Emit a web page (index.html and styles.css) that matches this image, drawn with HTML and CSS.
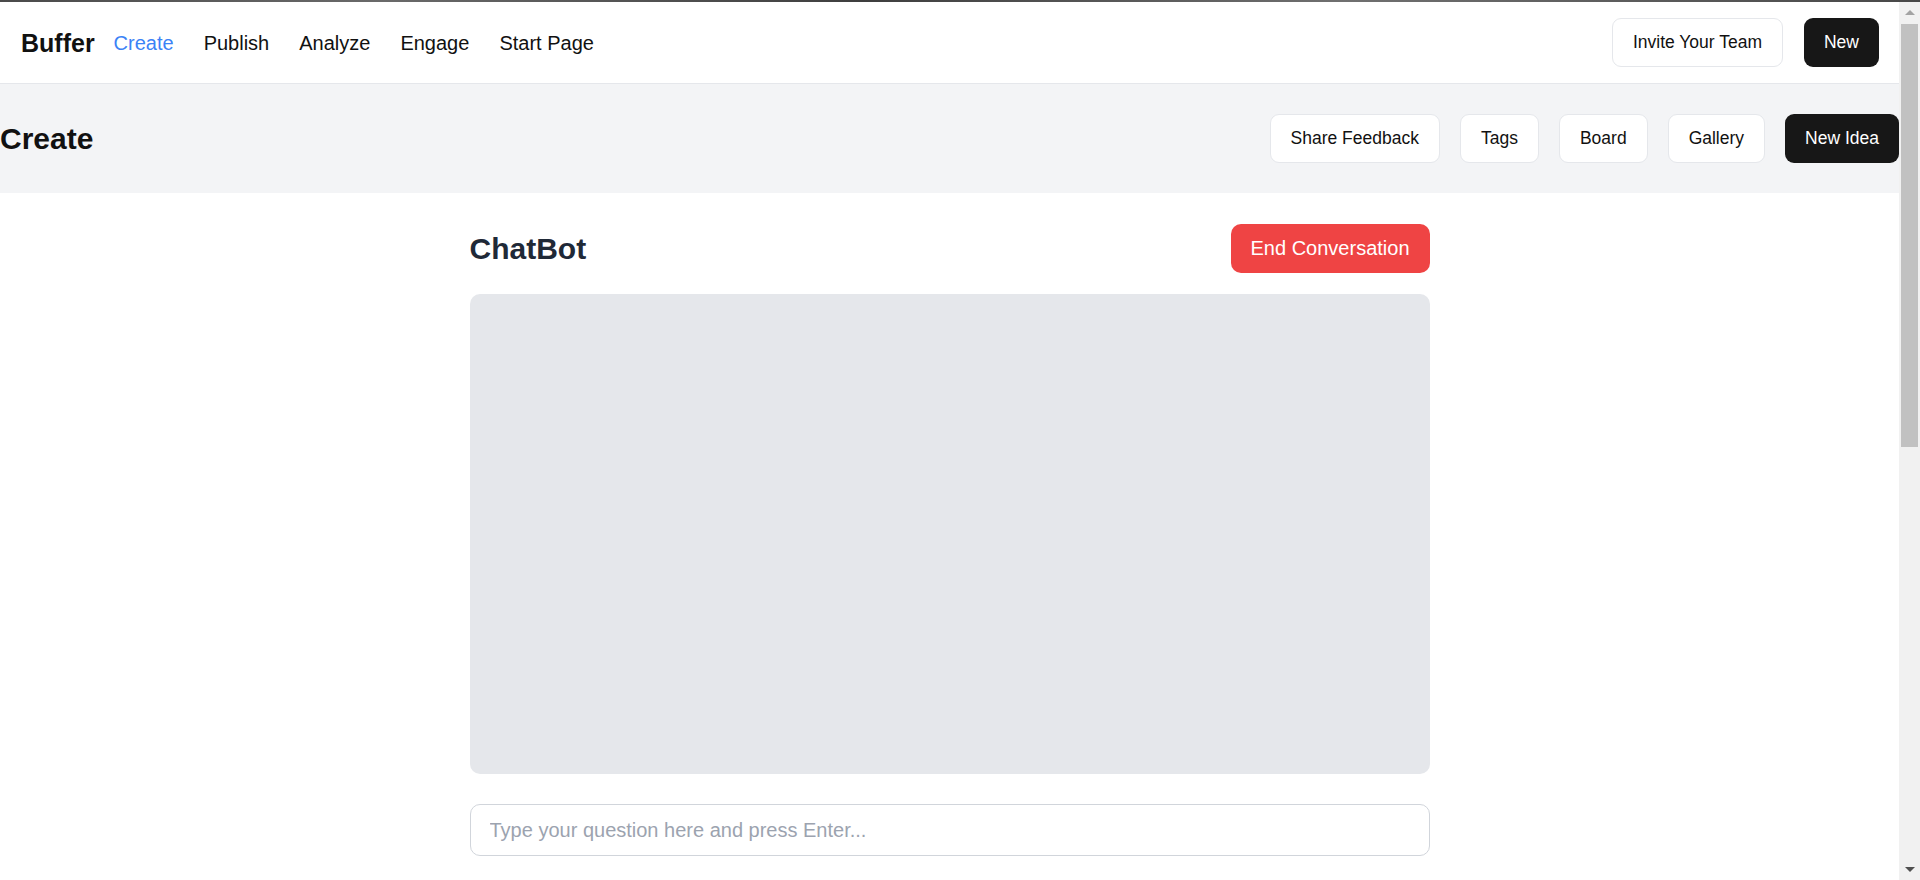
FILE: index.html
```html
<!DOCTYPE html>
<html lang="en">
<head>
<meta charset="utf-8">
<title>Buffer - Create</title>
<link rel="stylesheet" href="styles.css">
</head>
<body>
<div class="topstrip"></div>
<div class="frame">
  <div class="app">
    <header class="nav">
      <div class="nav-left">
        <span class="brand">Buffer</span>
        <nav class="links">
          <a class="link active">Create</a>
          <a class="link">Publish</a>
          <a class="link">Analyze</a>
          <a class="link">Engage</a>
          <a class="link">Start Page</a>
        </nav>
      </div>
      <div class="nav-right">
        <button class="btn btn-light">Invite Your Team</button>
        <button class="btn btn-dark">New</button>
      </div>
    </header>
    <section class="band">
      <h1 class="band-title">Create</h1>
      <div class="band-actions">
        <button class="btn btn-light">Share Feedback</button>
        <button class="btn btn-light">Tags</button>
        <button class="btn btn-light">Board</button>
        <button class="btn btn-light">Gallery</button>
        <button class="btn btn-dark">New Idea</button>
      </div>
    </section>
    <main class="main">
      <div class="chat">
        <div class="chat-head">
          <h2 class="chat-title">ChatBot</h2>
          <button class="btn-end">End Conversation</button>
        </div>
        <div class="chat-box"></div>
        <input class="chat-input" type="text" placeholder="Type your question here and press Enter...">
      </div>
    </main>
  </div>
  <div class="scrollbar">
    <div class="sb-btn"><span class="arrow-up"></span></div>
    <div class="sb-track"><div class="sb-thumb"></div></div>
    <div class="sb-btn sb-btn-down"><span class="arrow-down"></span></div>
  </div>
</div>
</body>
</html>
```
FILE: styles.css
```css
* { box-sizing: border-box; }
html, body { margin: 0; padding: 0; height: 880px; overflow: hidden; }
body {
  font-family: "Liberation Sans", Arial, sans-serif;
  color: #111;
  background: #fff;
}
.topstrip {
  height: 2px;
  background: linear-gradient(90deg, #4a4a4a, #6a6a6a 20%, #3e3e3e 45%, #707070 70%, #484848);
}
.frame {
  display: grid;
  grid-template-columns: 1fr 21px;
  height: 878px;
}
.app { overflow: hidden; min-width: 0; }

.nav {
  height: 82px;
  border-bottom: 1px solid #e5e7eb;
  display: flex;
  align-items: center;
  justify-content: space-between;
  padding: 0 20px 0 21px;
}
.nav-left { display: flex; align-items: center; padding-top: 2px; }
.brand { font-size: 25px; font-weight: bold; color: #111; }
.links { display: flex; gap: 30px; margin-left: 19px; }
.link { font-size: 20px; color: #111; text-decoration: none; }
.link.active { color: #3b82f6; }
.nav-right { display: flex; gap: 21px; align-items: center; }

.btn {
  height: 49px;
  padding: 0 20px;
  font-family: "Liberation Sans", Arial, sans-serif;
  font-size: 17.5px;
  border-radius: 9px;
  cursor: pointer;
}
.btn-light { background: #fff; color: #111; border: 1px solid #e5e7eb; }
.btn-dark { background: #171717; color: #fff; border: none; }

.band {
  height: 109px;
  background: #f3f4f6;
  display: flex;
  align-items: center;
  justify-content: space-between;
}
.band-title { margin: 0; font-size: 30px; font-weight: bold; color: #111; }
.band-actions { display: flex; gap: 20px; }

.main { padding-top: 31px; }
.chat { width: 960px; margin: 0 auto; }
.chat-head {
  display: flex;
  align-items: center;
  justify-content: space-between;
  height: 49px;
}
.chat-title { margin: 0; font-size: 30px; font-weight: bold; color: #1f2937; }
.btn-end {
  height: 49px;
  padding: 0 20px;
  background: #ef4444;
  color: #fff;
  border: none;
  border-radius: 10px;
  font-family: "Liberation Sans", Arial, sans-serif;
  font-size: 20px;
}
.chat-box {
  margin-top: 21px;
  height: 480px;
  background: #e5e7eb;
  border-radius: 10px;
}
.chat-input {
  display: block;
  width: 100%;
  margin-top: 30px;
  height: 52px;
  padding: 0 19px;
  border: 1px solid #d1d5db;
  border-radius: 10px;
  font-family: "Liberation Sans", Arial, sans-serif;
  font-size: 20px;
  color: #111;
  outline: none;
}
.chat-input::placeholder { color: #9ca3af; }

.scrollbar {
  background: #f1f1f1;
  display: flex;
  flex-direction: column;
}
.sb-btn {
  height: 21px;
  display: flex;
  align-items: center;
  justify-content: center;
}
.arrow-up {
  width: 0; height: 0;
  border-left: 5px solid transparent;
  border-right: 5px solid transparent;
  border-bottom: 5px solid #a3a3a3;
}
.arrow-down {
  width: 0; height: 0;
  border-left: 5px solid transparent;
  border-right: 5px solid transparent;
  border-top: 5px solid #505050;
}
.sb-track { flex: 1; padding: 1px 2px 0 2px; }
.sb-thumb { height: 423px; background: #c1c1c1; }
```
